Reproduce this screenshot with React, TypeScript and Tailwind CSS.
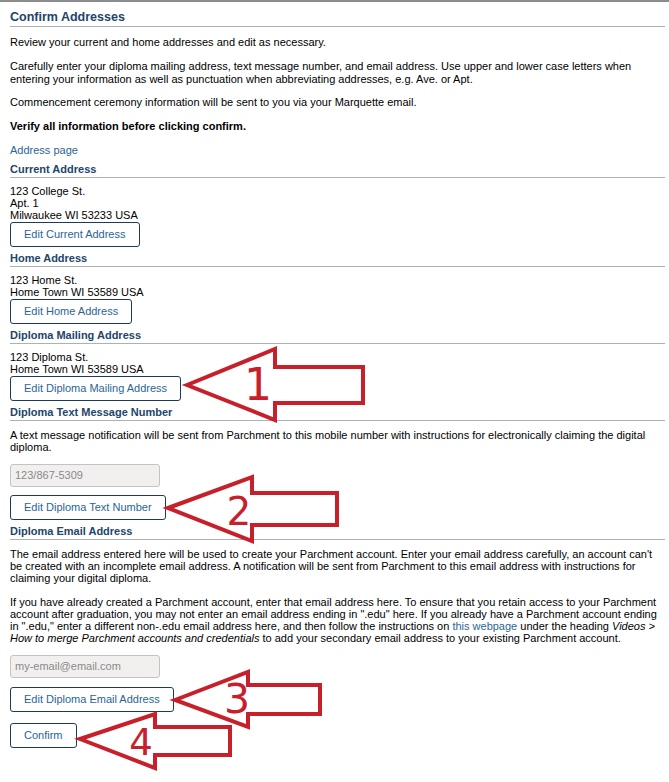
import React from 'react'

const Heading = ({ children }: { children: React.ReactNode }) => (
    <div className="text-[11px] leading-[13px] font-bold text-[#23456a] border-b border-[#b0b0b0] pb-[1px]">
        {children}
    </div>
)

const EditButton = ({ label, className = '' }: { label: string, className?: string }) => (
    <button className={`h-[25px] px-[13px] border border-[#1d3b58] rounded-[3px] bg-white text-[11px] text-[#2a6596] leading-none ${className}`}>
        {label}
    </button>
)

const ReadOnlyInput = ({ value, className = '' }: { value: string, className?: string }) => (
    <div className={`w-[150px] h-[23px] border border-[#c3c3c3] rounded-[3px] bg-[#f1f0ef] text-[11px] text-[#8a8a8a] flex items-center pl-[4px] ${className}`}>
        {value}
    </div>
)

const Arrows = () => (
    <svg className="absolute left-0 top-0 pointer-events-none" width="669" height="782" viewBox="0 0 669 782">
        <g fill="none" stroke="#c8202b" strokeWidth="4" strokeLinejoin="miter">
            <polygon points="187,385 275,349 275,367 363,367 363,403 275,403 275,420" />
            <polygon points="168,508 252,477 252,493 337,493 337,525 252,525 252,541" />
            <polygon points="175,700 248,672 248,685 320,685 320,714 248,714 248,727" />
            <polygon points="80,739 155,714 155,727 230,727 230,755 155,755 155,768" />
        </g>
        <g fill="#c8202b" fontFamily="'DejaVu Sans', sans-serif" textAnchor="middle">
            <text x="258" y="400" fontSize="44">1</text>
            <text x="239" y="525" fontSize="39">2</text>
            <text x="237" y="713" fontSize="41">3</text>
            <text x="141" y="755" fontSize="37">4</text>
        </g>
    </svg>
)

export default function App() {
    return (
        <div className="relative w-[669px] h-[782px] bg-white overflow-hidden font-['Liberation_Sans',Arial,sans-serif] text-black">
            <div className="border-t-2 border-[#8c8c8c] pl-[10px] pr-[4px]">
                {/* Title */}
                <h1 className="mt-[7px] text-[12.5px] leading-[16px] font-bold text-[#23456a] border-b border-[#b0b0b0] pb-[1px]">
                    Confirm Addresses
                </h1>

                <div className="text-[11px] leading-[13px]">
                    <p className="mt-[9px]">Review your current and home addresses and edit as necessary.</p>
                    <p className="mt-[11px]">
                        Carefully enter your diploma mailing address, text message number, and email address. Use upper and lower case letters when<br />
                        entering your information as well as punctuation when abbreviating addresses, e.g. Ave. or Apt.
                    </p>
                    <p className="mt-[10px]">Commencement ceremony information will be sent to you via your Marquette email.</p>
                    <p className="mt-[11px] font-bold">Verify all information before clicking confirm.</p>
                    <p className="mt-[11px]"><a className="text-[#2a6596]">Address page</a></p>
                </div>

                {/* Current Address */}
                <div className="mt-[6px]"><Heading>Current Address</Heading></div>
                <div className="mt-[7px] text-[11px] leading-[12px]">
                    <div>123 College St.</div>
                    <div>Apt. 1</div>
                    <div>Milwaukee WI 53233 USA</div>
                </div>
                <EditButton label="Edit Current Address" />

                {/* Home Address */}
                <div className="mt-[5px]"><Heading>Home Address</Heading></div>
                <div className="mt-[7px] text-[11px] leading-[12px]">
                    <div>123 Home St.</div>
                    <div>Home Town WI 53589 USA</div>
                </div>
                <EditButton label="Edit Home Address" />

                {/* Diploma Mailing Address */}
                <div className="mt-[5px]"><Heading>Diploma Mailing Address</Heading></div>
                <div className="mt-[7px] text-[11px] leading-[12px]">
                    <div>123 Diploma St.</div>
                    <div>Home Town WI 53589 USA</div>
                </div>
                <EditButton label="Edit Diploma Mailing Address" />

                {/* Diploma Text Message Number */}
                <div className="mt-[5px]"><Heading>Diploma Text Message Number</Heading></div>
                <p className="mt-[8px] text-[11px] leading-[12px]">
                    A text message notification will be sent from Parchment to this mobile number with instructions for electronically claiming the digital<br />
                    diploma.
                </p>
                <ReadOnlyInput value="123/867-5309" className="mt-[11px]" />
                <EditButton label="Edit Diploma Text Number" className="mt-[8px]" />

                {/* Diploma Email Address */}
                <div className="mt-[5px]"><Heading>Diploma Email Address</Heading></div>
                <div className="text-[11px] leading-[12px]">
                    <p className="mt-[8px]">
                        The email address entered here will be used to create your Parchment account. Enter your email address carefully, an account can't<br />
                        be created with an incomplete email address. A notification will be sent from Parchment to this email address with instructions for<br />
                        claiming your digital diploma.
                    </p>
                    <p className="mt-[12px]">
                        If you have already created a Parchment account, enter that email address here. To ensure that you retain access to your Parchment<br />
                        account after graduation, you may not enter an email address ending in ".edu" here. If you already have a Parchment account ending<br />
                        in ".edu," enter a different non-.edu email address here, and then follow the instructions on <a className="text-[#2a6596]">this webpage</a> under the heading <i>Videos &gt;</i><br />
                        <i>How to merge Parchment accounts and credentials</i> to add your secondary email address to your existing Parchment account.
                    </p>
                </div>
                <ReadOnlyInput value="my-email@email.com" className="mt-[11px]" />
                <EditButton label="Edit Diploma Email Address" className="mt-[9px] block" />
                <EditButton label="Confirm" className="mt-[11px] block" />
            </div>

            <Arrows />
        </div>
    )
}
